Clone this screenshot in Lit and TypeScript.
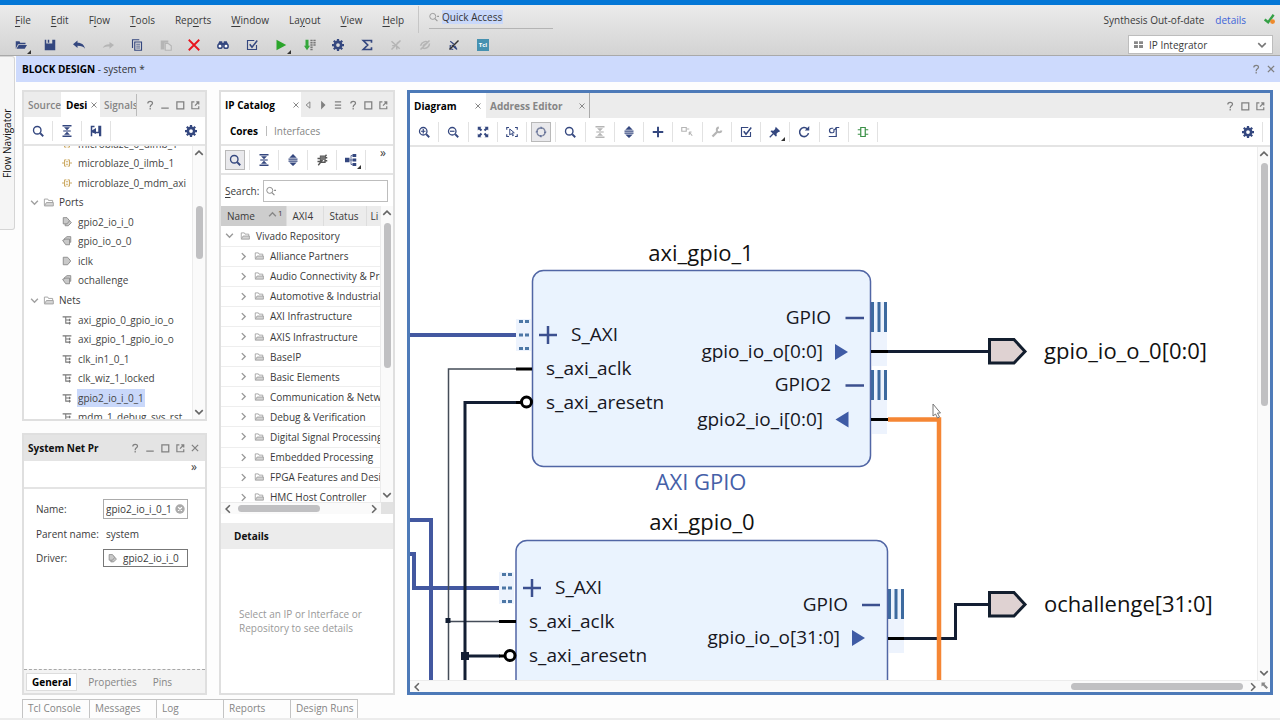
import { LitElement, html, svg, css } from "lit";
import { customElement } from "lit/decorators.js";
import { classMap } from "lit/directives/class-map.js";

const glyphs: Record<string, unknown> = {
  open: svg`<path fill="currentColor" d="M1 3h5l1 2h7v2H4l-3 6zM5 8h11l-3 5H2z"/>`,
  save: svg`<path fill="currentColor" d="M1 1h2v5h8V1h4v14H1zM5 1h2v4H5z"/>`,
  undo: svg`<path fill="currentColor" d="M0 7l6-5v3c6 0 9 3 10 8-2-3-5-4-10-4v3z"/>`,
  redo: svg`<path fill="currentColor" d="M16 8l-6-4v3C5 7 2 9 1 12c3-2 5-2 9-2v3z"/>`,
  copy: svg`<path fill="none" stroke="currentColor" stroke-width="1.5" d="M5 4h9v11H5zM11 1H2v11"/><path stroke="currentColor" d="M7 7h5M7 9.500h5M7 12h5" stroke-width="1"/>`,
  paste: svg`<path fill="currentColor" d="M1 2h10v3H6v9H1z"/><path fill="#ddd" stroke="currentColor" stroke-width="1.500" d="M7 6h4l4 3v6H7z"/>`,
  remove: svg`<path stroke="#e8141c" stroke-width="2.400" d="M1 1l14 14M15 1L1 15"/>`,
  find: svg`<path fill="currentColor" d="M3 3h4v2h2V3h4l2 5H1z"/><circle cx="4" cy="9.500" r="2.900" fill="#fff" stroke="currentColor" stroke-width="2"/><circle cx="12" cy="9.500" r="2.900" fill="#fff" stroke="currentColor" stroke-width="2"/>`,
  check: svg`<path fill="none" stroke="currentColor" stroke-width="1.500" d="M11 2H2v12h12V8"/><path fill="none" stroke="currentColor" stroke-width="2" d="M5 7l3 4 7-9"/>`,
  run: svg`<path fill="#2ba52b" d="M2 1l13 7-13 7z"/>`,
  steps: svg`<path fill="#35a73c" d="M2 1h4v8h2l-4 6-4-6h2z"/><path stroke="#777" stroke-width="3" stroke-dasharray="2 1" d="M10 1v14M14 1v9"/>`,
  gear: svg`<circle cx="8" cy="8" r="4.200" fill="none" stroke="currentColor" stroke-width="3.400"/><path stroke="currentColor" stroke-width="3" d="M8 0v3M8 13v3M0 8h3M13 8h3M2.400 2.400l2 2M11.600 11.600l2 2M13.600 2.400l-2 2M4.400 11.600l-2 2"/>`,
  sigma: svg`<path fill="none" stroke="currentColor" stroke-width="2.200" d="M14 5V2H3l6 6-6 6h11v-3"/>`,
  nolink: svg`<path fill="none" stroke="currentColor" stroke-width="2" d="M2 3l11 10M14 2L2 14M9 6l4-3M3 9l4-2M9 10v4"/>`,
  noeye: svg`<path fill="none" stroke="currentColor" stroke-width="2" d="M14 2L2 14M2 9c2-6 8-6 9-5M5 12c5 2 9-2 9-6M5 9l4-3"/>`,
  nohl: svg`<path fill="none" stroke="currentColor" stroke-width="1.600" d="M3 3l5 4M9 9l3 5M5 8l7 6M3 8v5l4 1"/><path stroke="#333" stroke-width="2" d="M14 2L2 14"/>`,
  zoomin: svg`<circle cx="7" cy="7" r="5" fill="none" stroke="currentColor" stroke-width="1.700"/><path stroke="currentColor" stroke-width="2.400" d="M11 11l4 4"/><path stroke="currentColor" stroke-width="1.600" d="M4 7h6M7 4v6"/>`,
  zoomout: svg`<circle cx="7" cy="7" r="5" fill="none" stroke="currentColor" stroke-width="1.700"/><path stroke="currentColor" stroke-width="2.400" d="M11 11l4 4"/><path stroke="currentColor" stroke-width="1.600" d="M4 7h6"/>`,
  fit: svg`<path fill="currentColor" d="M1 1h5L4.500 2.500 7 5 5 7 2.500 4.500 1 6zM15 1v5l-1.500-1.500L11 7 9 5l2.500-2.500L10 1zM15 15h-5l1.500-1.500L9 11l2-2 2.500 2.500L15 10zM1 15v-5l1.500 1.500L5 9l2 2-2.500 2.500L6 15z"/>`,
  fitsel: svg`<path fill="none" stroke="currentColor" stroke-width="1.500" d="M1 5V2h3M12 2h3v3M15 11v3h-3M4 14H1v-3"/><path fill="none" stroke="currentColor" stroke-width="1.300" d="M5 4l6 5-3 .5 2 3-1 .6-2-3L5 12z"/>`,
  target: svg`<circle cx="8" cy="8" r="5.500" fill="none" stroke="#7b84a0" stroke-width="1.800" stroke-dasharray="6.600 2"/><path stroke="currentColor" stroke-width="1.500" d="M8 1v3M8 12v3M1 8h3M12 8h3"/>`,
  search: svg`<circle cx="7" cy="7" r="5" fill="none" stroke="currentColor" stroke-width="1.800"/><path stroke="currentColor" stroke-width="2.400" d="M11 11l4 4"/>`,
  lookup: svg`<circle cx="6" cy="7" r="4.800" fill="none" stroke="currentColor" stroke-width="1.500"/><path stroke="currentColor" stroke-width="1.800" d="M9.500 10.500l4 4M13 7h3"/>`,
  collapse: svg`<path fill="currentColor" d="M2 0h12v2H2zM4 3h8L8 7zM8 9l4 4H4zM2 14h12v2H2z"/><path stroke="currentColor" stroke-width="1.500" d="M3 8h10"/>`,
  expand: svg`<path fill="currentColor" d="M8 0l5 5H3zM2 6h12v1.600H2zM2 8.600h12v1.600H2zM3 11.200h10l-5 4.800z"/>`,
  add: svg`<path stroke="currentColor" stroke-width="2.600" d="M8 1v14M1 8h14"/>`,
  route: svg`<path fill="none" stroke="currentColor" stroke-width="1.500" d="M1 2h6v5H1zM8 4h3M11 8l4 5M11 8h3M11 8v4"/>`,
  wrench: svg`<path fill="none" stroke="currentColor" stroke-width="3" d="M2 14l7-7"/><path fill="none" stroke="currentColor" stroke-width="2.600" d="M10.500 2A3.200 3.200 0 1 0 14 6"/>`,
  pin: svg`<path fill="currentColor" d="M9 1l6 6-2 1-1 .4-2 2 .4 3L9 14 2 7l1-1 3 .3 2-2z"/><path stroke="currentColor" stroke-width="1.700" d="M6 10l-5 5"/>`,
  refresh: svg`<path fill="none" stroke="currentColor" stroke-width="2" d="M12.500 4A6 6 0 1 0 14 9.500"/><path fill="currentColor" d="M15 0v6H9z"/>`,
  loop: svg`<path fill="none" stroke="currentColor" stroke-width="1.600" d="M7 3H5a3 3 0 0 0 0 6h1a2 2 0 0 0 2-2V4M1 14h10V2h4M9 5l2-3"/>`,
  chip: svg`<path fill="none" stroke="#3b9147" stroke-width="1.600" d="M5 2h6v12H5zM1 5h4M1 11h4M11 5h4M11 11h4"/>`,
  tree: svg`<path fill="currentColor" d="M0 5h6v6H0zM10 0h5v4h-5zM10 6h5v4h-5zM10 12h5v4h-5z"/><path fill="none" stroke="currentColor" d="M6 8h4M8 14V2h2M8 14h2"/>`,
  nochip: svg`<path fill="none" stroke="#555" stroke-width="1.800" d="M6 3h6v8H6zM2 6h4M2 10h4M12 5h3M12 9h3M14 1L3 15"/><path fill="#777" d="M6 3h6v5H6z"/>`,
  follow: svg`<path fill="currentColor" d="M1 1h5v2H3v4l5-3v8L3 10v5H1zM11 1h4v14h-3v-4H7V9h4z"/>`,
  help: svg`<path fill="none" stroke="currentColor" stroke-width="2" d="M4.500 5.500C4.500 1 12 1 12 5c0 2.500-3.700 2.800-3.700 6M8.300 12.500V15"/>`,
  min: svg`<path stroke="currentColor" stroke-width="2" d="M2 13h12"/>`,
  max: svg`<path fill="none" stroke="currentColor" stroke-width="2" d="M3 3h11v11H3z"/>`,
  float: svg`<path fill="none" stroke="currentColor" stroke-width="1.900" d="M7 3H3v11h11v-4M8 9l5-5M10 3h4v4"/>`,
  close: svg`<path stroke="currentColor" stroke-width="2" d="M3 3l10 10M13 3L3 13"/>`,
  prev: svg`<path fill="none" stroke="currentColor" stroke-width="1.500" d="M11 3v10L5 8z"/>`,
  next: svg`<path fill="currentColor" d="M5 1v14l7-7z"/>`,
  list: svg`<path stroke="currentColor" stroke-width="2" d="M3 3h10M3 8h10M3 13h10"/>`,
  up: svg`<path fill="none" stroke="currentColor" stroke-width="2.500" d="M2 11l6-6 6 6"/>`,
  down: svg`<path fill="none" stroke="currentColor" stroke-width="2.500" d="M2 5l6 6 6-6"/>`,
  left: svg`<path fill="none" stroke="currentColor" stroke-width="2.500" d="M11 2L5 8l6 6"/>`,
  right: svg`<path fill="none" stroke="currentColor" stroke-width="2.500" d="M5 2l6 6-6 6"/>`,
  folder: svg`<path fill="none" stroke="currentColor" stroke-width="1.300" d="M2 12V3h5l1 2h6v3"/><path fill="#d4d4d4" stroke="currentColor" stroke-width="1.300" d="M2 13l3-5h10v5z"/>`,
  iface: svg`<path fill="none" stroke="#c9a45a" stroke-width="1.500" d="M7 3H4v10h3M9 3h3v10H9M0 8h4M6 6h4M6 10h4M12 8h4"/>`,
  inport: svg`<path fill="#c9c9c9" stroke="#888" stroke-width="1.400" d="M2 2h7l5 6-5 6H2z"/>`,
  inbus: svg`<path fill="#c9c9c9" stroke="#888" stroke-width="1.400" d="M5 4h5l5 5-5 5H5z"/><path fill="#c9c9c9" stroke="#888" stroke-width="1.400" d="M2 1h6l4 5-4 5H2z"/>`,
  outport: svg`<path fill="#c9c9c9" stroke="#888" stroke-width="1.400" d="M14 1H8L3 5l3 5h8z"/><path fill="#c9c9c9" stroke="#888" stroke-width="1.400" d="M12 5H6L1 7l5 7h6z"/>`,
  net: svg`<path fill="none" stroke="#777" stroke-width="1.700" d="M1 3h14M6 3v10h8M6 8h8M12 6v4M12 11v4"/>`,
  layout: svg`<path fill="#888" d="M0 2h7v5H0zM9 2h7v5H9zM0 9h7v5H0zM9 9h7v5H9z"/>`,
  status: svg`<path fill="none" stroke="#35a046" stroke-width="3.500" d="M1 8l5 4 8-11"/><circle cx="12.500" cy="11" r="3.500" fill="#ee8a2c"/>`,
  clear: svg`<circle cx="8" cy="8" r="7.500" fill="#aaa"/><path stroke="#fff" stroke-width="2" d="M5 5l6 6M11 5l-6 6"/>`,
  resize: svg`<path fill="#888" d="M1 1h8L7 4l7 7-3 3-7-7-3 2z"/>`,
};

const icon = (name: string, size = 12) =>
  html`<svg class="icon" width=${size} height=${size} viewBox="0 0 16 16" aria-hidden="true">${glyphs[name]}</svg>`;

const tool = (name: string, label: string, o: { off?: boolean; on?: boolean; menu?: boolean } = {}) => html`
  <button class=${classMap({ tool: true, off: !!o.off, on: !!o.on, menu: !!o.menu })} aria-label=${label} ?disabled=${!!o.off}>
    ${icon(name)}
  </button>`;

const small = (...names: string[]) => names.map((n) => html`<button class="small" aria-label=${n}>${icon(n, 10)}</button>`);

const scroll = (dir: "v" | "h", before: number, thumb: number, after: number) => html`
  <div class="scroll ${dir}">
    ${icon(dir === "v" ? "up" : "left", 10)}
    <div class="track">
      <span style="flex-grow:${before}"></span><span class="thumb" style="flex-grow:${thumb}"></span><span style="flex-grow:${after}"></span>
    </div>
    ${icon(dir === "v" ? "down" : "right", 10)}
  </div>`;

const menus = [["", "F", "ile"], ["", "E", "dit"], ["F", "l", "ow"], ["", "T", "ools"], ["Rep", "o", "rts"], ["", "W", "indow"], ["La", "y", "out"], ["", "V", "iew"], ["", "H", "elp"]];

const designTree: [string, string][] = [
  ["iface", "microblaze_0_dlmb_1"], ["iface", "microblaze_0_ilmb_1"], ["iface", "microblaze_0_mdm_axi"],
  ["", "Ports"], ["inbus", "gpio2_io_i_0"], ["outport", "gpio_io_o_0"], ["inport", "iclk"], ["outport", "ochallenge"],
  ["", "Nets"], ["net", "axi_gpio_0_gpio_io_o"], ["net", "axi_gpio_1_gpio_io_o"], ["net", "clk_in1_0_1"],
  ["net", "clk_wiz_1_locked"], ["net", "gpio2_io_i_0_1"], ["net", "mdm_1_debug_sys_rst"],
];

const cores = ["Alliance Partners", "Audio Connectivity & Processing", "Automotive & Industrial", "AXI Infrastructure", "AXIS Infrastructure",
  "BaseIP", "Basic Elements", "Communication & Networking", "Debug & Verification", "Digital Signal Processing", "Embedded Processing",
  "FPGA Features and Design", "HMC Host Controller"];

const bars = (x: number, y: number) => svg`
  <rect class="halo" x=${x + 1} y=${y} width="15" height="64"/>
  <path class="bus" d="M${x + 1.5} ${y}v30M${x + 8} ${y}v30M${x + 14.5} ${y}v30"/>`;

const dots = (x: number, y: number) => svg`
  <rect class="halo" x=${x} y=${y - 16} width="15" height="32"/>
  <path class="dots" d="M${x + 3} ${y - 13.5}h10M${x + 3} ${y}h10M${x + 3} ${y + 13.5}h10"/>`;

const plus = (x: number, y: number) => svg`<path class="mark" d="M${x - 9} ${y}h18M${x} ${y - 9}v18"/>`;

@customElement("app-root")
export class AppRoot extends LitElement {
  static styles = css`
    :host { display: flex; flex-direction: column; height: 100vh; overflow: hidden; background: #fdfdfd; color: #3a3a3a;
      font: 10px/14px "Open Sans", "Noto Sans", sans-serif; }
    * { box-sizing: border-box; }
    button, input, select { font: inherit; color: inherit; margin: 0; padding: 0; border: 0; background: none; border-radius: 0; }
    button { cursor: default; }
    a { color: #3d63d8; text-decoration: none; }
    u { text-underline-offset: 2px; }
    .icon { display: block; flex: none; }
    .strip { flex: none; height: 5px; background: #0477d6; }
    .top { flex: none; display: grid; grid-template-columns: 1fr auto; height: 51px; border-bottom: 1px solid #a9a9a9;
      background: linear-gradient(#ebebeb, #d3d3d3); }
    .menubar { display: flex; align-items: center; height: 29px; padding-left: 15px; gap: 20px; }
    .menubar button { white-space: nowrap; }
    .quick { display: flex; align-items: flex-start; height: 27px; padding-left: 10px; margin-left: -6px; border-left: 1px solid #c6c6c6; color: #999; }
    .quick label { display: flex; align-items: center; gap: 3px; width: 124px; height: 23px; border-bottom: 1px solid #b4b4b4; }
    .quick input { width: 61px; height: 14px; background: #c9d8fa; color: #333; outline: 0; }
    .quick input::placeholder { color: #333; opacity: 1; }
    .maintools { display: grid; grid-template-columns: repeat(17, 1fr); width: 490px; height: 22px; margin-left: 7px; }
    .status { display: flex; flex-direction: column; align-items: flex-end; width: 180px; }
    .state { display: flex; align-items: center; height: 29px; gap: 11px; padding-right: 5px; white-space: nowrap; }
    .state .icon { margin-left: 7px; }
    .picker { position: relative; display: flex; align-items: center; width: 145px; height: 19px; margin: 1px 7px 0 0; background: #fff; border: 1px solid #bdbdbd; color: #777; }
    .picker select { position: absolute; inset: 0; padding-left: 20px; appearance: none; color: #3a3a3a; width: 100%; }
    .picker .icon { margin: 0 5px; }
    .picker .icon:last-child { margin-left: auto; }

    .tool { position: relative; display: grid; place-items: center; height: 20px; width: 20px; justify-self: center; align-self: center; color: #34477f; }
    .tool.off { color: #b5b5b5; }
    .tool.on { background: #e9e9ec; border: 1px solid #b9b9b9; }
    .tool.menu::after { content: ""; position: absolute; right: 0; bottom: 1px; border: solid transparent; border-width: 4px 0 0 4px; border-bottom: 4px solid #333; border-top: 0; }
    .small { display: grid; place-items: center; width: 15px; height: 16px; color: #808080; }

    .work { flex: 1; min-height: 0; display: flex; }
    .nav { flex: none; width: 16px; }
    .navtab { display: flex; align-items: center; justify-content: center; width: 15px; height: 174px; background: #f5f5f5; border: 1px solid #d5d5d5;
      border-right: 0; border-radius: 3px 0 0 3px; color: #111; writing-mode: vertical-rl; transform: rotate(180deg); }
    .area { flex: 1; min-width: 0; display: flex; flex-direction: column; }
    .bar { flex: none; display: flex; align-items: center; height: 26px; padding: 0 2px 0 6px; background: #cddafd; }
    .bar h1 { flex: 1; margin: 0; font-size: 10px; line-height: 14px; font-weight: 700; color: #000; }
    .bar h1 span { font-weight: 400; color: #333; }
    .panes { flex: 1; min-height: 0; display: grid; grid-template-columns: 185px 176px minmax(0, 1fr); gap: 12px; padding: 8px 7px 0 6px; }
    .left { display: flex; flex-direction: column; gap: 12px; min-height: 0; }
    .panel { display: flex; flex-direction: column; min-height: 0; min-width: 0; background: #fff; border: 2px solid #dfdfdf; overflow: hidden; }
    .design { height: 331px; flex: none; }
    .props { flex: 1; }
    .head { flex: none; display: flex; align-items: center; height: 25px; padding-right: 3px; background: #ececec; color: #858585; }
    .tab { display: flex; align-items: center; height: 25px; color: #858585; font-weight: 600; white-space: nowrap; }
    .tab.active { background: #fff; color: #000; font-weight: 700; }
    .tab .icon { color: #888; }
    .src { width: 37px; padding-left: 4px; }
    .des { width: 39px; padding-left: 5px; gap: 3px; }
    .sig { width: 37px; height: 22px; padding-left: 4px; border-right: 1px solid #bbb; overflow: hidden; }
    .ipc { width: 80px; padding: 0 1px 0 4px; }
    .dia { width: 76px; padding: 0 4px; }
    .adr { width: 104px; padding: 0 3px 0 4px; font-weight: 700; border-right: 1px solid #aaa; }
    .grow { flex: 1; }
    .tools { flex: none; display: flex; align-items: center; height: 29px; border-bottom: 2px solid #e4e4e4; }
    .tools .cell { display: grid; place-items: center; width: 29px; height: 20px; border-right: 1px solid #e2e2e2; }
    .tools .cell.last { border-right: 0; }
    .edge { width: 8px; height: 20px; border-left: 1px solid #e2e2e2; }
    .over { align-self: flex-start; padding-right: 7px; font-size: 12px; }
    .body { flex: 1; min-height: 0; display: flex; overflow: hidden; }

    .scroll { flex: none; display: flex; align-items: center; background: #fafafa; color: #666; gap: 4px; }
    .scroll.v { flex-direction: column; width: 13px; padding: 2px 0; border-left: 1px solid #ececec; }
    .scroll.h { height: 12px; padding: 0 2px; border-top: 1px solid #ececec; }
    .track { flex: 1; display: flex; align-self: stretch; align-items: center; }
    .track span { flex-basis: 0; }
    .v .track { flex-direction: column; }
    .thumb { background: #c0c0c2; border-radius: 4px; }
    .v .thumb { width: 7px; }
    .h .thumb { height: 7px; }

    .treebox { flex: 1; min-width: 0; overflow: hidden; }
    .tree { display: grid; grid-template-rows: repeat(15, 1fr); height: 293px; margin: -12px 0 0; padding: 0; list-style: none; }
    .tree li { display: flex; align-items: center; gap: 5px; padding-left: 38px; white-space: nowrap; color: #444; }
    .tree li.group { padding-left: 6px; gap: 4px; color: #a0a0a0; }
    .tree li span { padding: 2px 1px; }
    .tree li.group span { color: #3a3a3a; }
    .tree li.picked span { background: #c9d8fa; }

    .props .head { height: 26px; background: #e4e4e4; padding: 0 3px 0 4px; }
    h2 { margin: 0; font-size: 10px; line-height: 14px; font-weight: 700; color: #111; white-space: nowrap; }
    .more { flex: none; height: 28px; padding: 0 8px; text-align: right; border-bottom: 2px solid #e4e4e4; font-size: 12px; line-height: 12px; }
    .form { flex: 1; display: grid; grid-template-columns: 67px 85px; grid-template-rows: 20px 20px 18px; row-gap: 5px; align-content: start; align-items: center; padding: 10px 0 0 12px; }
    .field { display: flex; align-items: center; height: 20px; border: 1px solid #ababab; padding: 0 2px; }
    .field input { flex: 1; min-width: 0; outline: 0; }
    .form output { padding-left: 3px; }
    .driver { display: flex; align-items: center; gap: 6px; height: 18px; padding: 0 4px; border: 1px solid #777; white-space: nowrap; }
    .subtabs { flex: none; display: flex; align-items: center; height: 24px; padding-left: 2px; gap: 6px; background: #f3f3f3; border-top: 1px dashed #a8a8a8; color: #858585; }
    .subtabs button { height: 18px; padding: 0 5px; }
    .subtabs .active { background: #fff; border: 1px solid #ddd; color: #000; font-weight: 700; }

    .kinds { flex: none; display: flex; align-items: center; height: 29px; padding-left: 9px; gap: 7px; color: #858585; border-bottom: 2px solid #e4e4e4; }
    .kinds .active { font-weight: 700; color: #000; padding-right: 8px; border-right: 1px solid #bbb; line-height: 10px; }
    .search { flex: none; display: flex; align-items: center; gap: 4px; height: 31px; padding: 0 5px 0 4px; }
    .searchbox { flex: 1; min-width: 0; display: flex; align-items: center; height: 22px; padding-left: 2px; border: 1px solid #bdbdbd; color: #888; }
    .searchbox input { flex: 1; min-width: 0; outline: 0; }
    .results { flex: none; height: 308px; display: flex; flex-direction: column; }
    .clip { flex: 1; min-width: 0; overflow: hidden; }
    table { width: 100%; height: 302px; table-layout: fixed; border-collapse: collapse; }
    .c1 { width: 65px; }
    .c2 { width: 37px; }
    .c3 { width: 43px; }
    th { height: 20px; padding: 0 0 0 6px; font-weight: 400; text-align: left; background: #ececec; border-right: 1px solid #ddd; overflow: hidden; white-space: nowrap; }
    th:last-child { padding-left: 4px; border-right: 0; }
    th.sorted { background: #cdcdcd; }
    .sort { display: flex; align-items: center; }
    .sort .icon { margin: 0 1px 4px auto; color: #888; }
    .sort small { font-size: 8px; line-height: 8px; margin: 0 3px 6px 0; }
    td { height: 20px; padding: 0; border-bottom: 1px solid #eee; overflow: hidden; white-space: nowrap; }
    .entry { display: flex; align-items: center; gap: 6px; padding-left: 18px; color: #9a9a9a; }
    .entry span { color: #3a3a3a; }
    .entry.root { padding-left: 4px; }
    .hrow { flex: none; display: flex; background: #e2e2e2; }
    .hrow .scroll { flex: 1; margin-right: 12px; }
    .details { flex: none; display: flex; align-items: center; height: 26px; margin-top: 9px; padding-left: 13px; background: #ececec; }
    .empty { flex: 1; display: grid; align-content: center; padding: 0 18px; color: #999; margin: 0; white-space: nowrap; }

    .diagram { border: 3px solid #4d7ab8; }
    .cells { display: grid; grid-template-columns: repeat(16, 1fr); width: 468px; }
    .cells .cell { width: auto; }
    .canvasbox { flex: 1; min-width: 0; overflow: hidden; }
    .canvas { display: block; width: 100%; height: 100%; }
    .foot { flex: none; display: flex; align-items: center; background: #fafafa; }
    .foot .scroll { flex: 1; }
    .foot > .icon { margin: 0 1px; }
    .canvas text { font-size: 19px; fill: #17171f; }
    .canvas .title { font-size: 22px; text-anchor: middle; fill: #111; }
    .canvas .kind { font-size: 22px; text-anchor: middle; fill: #4560a8; }
    .canvas .port { font-size: 22px; fill: #111; }
    .canvas .end { text-anchor: end; }
    .block { fill: #eaf3fe; stroke: #5166a5; stroke-width: 1.5; }
    .halo { fill: #edf3fd; }
    .bus { fill: none; stroke: #3d6a9f; stroke-width: 3; }
    .dots { fill: none; stroke: #4d77a5; stroke-width: 3; stroke-dasharray: 4 2; }
    .mark { fill: none; stroke: #3c508f; stroke-width: 2.5; }
    .tri { fill: #3f5ba5; }
    .wire { fill: none; stroke: #4358a0; stroke-width: 4; }
    .thin { fill: none; stroke: #444c58; stroke-width: 1.5; }
    .reset { fill: none; stroke: #131e33; stroke-width: 3; }
    .stub { fill: none; stroke: #000; stroke-width: 3; }
    .hot { fill: none; stroke: #f58634; stroke-width: 4.5; }
    .term { fill: #dfd2d2; stroke: #131e2e; stroke-width: 3; }
    .dot { fill: #131e33; }
    .ring { fill: #fff; stroke: #000; stroke-width: 3; }
    .tcl { font-size: 6px; font-weight: 700; text-anchor: middle; fill: #fff; }

    .docks { flex: none; display: flex; height: 25px; padding: 4px 0 0 22px; border-bottom: 2px solid #ececec; }
    .docks button { padding: 0 5px 2px; text-align: left; color: #858585; border: 1px solid #c4c4c4; border-bottom: 0; border-left: 0; width: 67px; white-space: nowrap; }
    .docks button:first-child { border-left: 1px solid #c4c4c4; width: 68px; }
  `;

  private diagram() {
    return html`<svg class="canvas" role="img" aria-label="Block diagram">
      <g transform="translate(-410 -147)">
        <path class="wire" d="M410 335H516M410 520H431V680M410 554H414V588H499"/>
        <path class="thin" d="M448.500 680V369H516M448 621.500H499"/>
        <path class="reset" d="M465 680V402.500H516M465 656H500"/>
        <rect class="dot" x="445.500" y="618" width="5" height="5"/>
        <rect class="dot" x="461" y="652" width="8" height="8"/>

        ${dots(516, 335)}${dots(499, 588)}${bars(871, 302)}${bars(871, 370)}${bars(888, 589)}
        <rect class="block" x="532.500" y="270.500" width="338" height="196" rx="11"/>
        <rect class="block" x="516" y="540.500" width="371.500" height="200" rx="11"/>
        <path class="stub" d="M516 369H532M499 621.500H516M516 402.500H522M499 656H504M871 351.500H888M871 419.500H888M888 638.500H904"/>
        <circle class="ring" cx="526.500" cy="402" r="5"/>
        <circle class="ring" cx="510" cy="655.500" r="5"/>

        <text class="title" x="701" y="261">axi_gpio_1</text>
        ${plus(548, 335)}
        <text x="571" y="341">S_AXI</text>
        <text x="546" y="375">s_axi_aclk</text>
        <text x="546" y="409">s_axi_aresetn</text>
        <text class="end" x="831" y="324">GPIO</text>
        <text class="end" x="823" y="358">gpio_io_o[0:0]</text>
        <text class="end" x="831" y="391">GPIO2</text>
        <text class="end" x="823" y="426">gpio2_io_i[0:0]</text>
        <path class="mark" d="M845.500 318H864M845.500 385.500H864M862 605H880"/>
        <path class="tri" d="M835 344v16l13-8zM848.500 411.500v16l-13-8zM852 630v16l13-8z"/>
        <text class="kind" x="701" y="490">AXI GPIO</text>

        <text class="title" x="702" y="530">axi_gpio_0</text>
        ${plus(532, 588)}
        <text x="555" y="594">S_AXI</text>
        <text x="529" y="628">s_axi_aclk</text>
        <text x="529" y="662">s_axi_aresetn</text>
        <text class="end" x="848" y="611">GPIO</text>
        <text class="end" x="840" y="644">gpio_io_o[31:0]</text>

        <path class="reset" d="M888 351.500H989M904 638.500H955.500V604.500H989"/>
        <path class="hot" d="M888 419.500H939V680"/>
        <path class="term" d="M989.500 339.500H1014L1025 351.500L1014 363H989.500zM989.500 592.500H1014L1025 604.500L1014 616H989.500z"/>
        <text class="port" x="1044" y="359">gpio_io_o_0[0:0]</text>
        <text class="port" x="1044" y="612">ochallenge[31:0]</text>
        <path fill="#fff" stroke="#777" d="M933 404v12l2.500-2 2 4 2-1-2-4h3z"/>
      </g>
    </svg>`;
  }

  render() {
    return html`
      <div class="strip"></div>
      <header class="top">
        <div>
          <nav class="menubar">
            ${menus.map(([a, k, b]) => html`<button>${a}<u>${k}</u>${b}</button>`)}
            <div class="quick"><label>${icon("lookup", 10)}<input aria-label="Quick Access" placeholder="Quick Access"></label></div>
          </nav>
          <div class="maintools">
            ${tool("open", "Open", { menu: true })}${tool("save", "Save")}${tool("undo", "Undo")}${tool("redo", "Redo", { off: true })}
            ${tool("copy", "Copy")}${tool("paste", "Paste", { off: true })}${tool("remove", "Delete")}${tool("find", "Find")}
            ${tool("check", "Validate")}${tool("run", "Run", { menu: true })}${tool("steps", "Generate bitstream")}${tool("gear", "Settings")}
            ${tool("sigma", "Report")}${tool("nolink", "Unmark", { off: true })}${tool("noeye", "Unhighlight", { off: true })}${tool("nohl", "Unselect")}
            <button class="tool" aria-label="Tcl console"><svg class="icon" width="12" height="12" aria-hidden="true"><rect width="12" height="12" fill="#4691b0"/><text class="tcl" x="6" y="8">Tcl</text></svg></button>
          </div>
        </div>
        <div class="status">
          <div class="state"><span>Synthesis Out-of-date</span><a href="#details">details</a>${icon("status", 11)}</div>
          <div class="picker">${icon("layout", 9)}<select aria-label="Layout"><option>IP Integrator</option></select>${icon("down", 10)}</div>
        </div>
      </header>

      <main class="work">
        <div class="nav"><button class="navtab">Flow Navigator</button></div>
        <div class="area">
          <div class="bar"><h1>BLOCK DESIGN <span>- system *</span></h1>${small("help", "close")}</div>
          <div class="panes">
            <div class="left">
              <section class="panel design">
                <div class="head">
                  <button class="tab src">Source</button><button class="tab active des">Desi ${icon("close", 8)}</button><button class="tab sig">Signals</button>
                  <span class="grow"></span>${small("help", "min", "max", "float")}
                </div>
                <div class="tools">
                  <div class="cell">${tool("search", "Search")}</div><div class="cell">${tool("collapse", "Collapse all")}</div><div class="cell">${tool("follow", "Follow")}</div>
                  <span class="grow"></span><div class="cell last">${tool("gear", "Settings")}</div>
                </div>
                <div class="body">
                  <div class="treebox"><ul class="tree">
                    ${designTree.map(([kind, name]) => kind
                      ? html`<li class=${name === "gpio2_io_i_0_1" ? "picked" : ""}>${icon(kind, 10)}<span>${name}</span></li>`
                      : html`<li class="group">${icon("down", 9)}${icon("folder", 11)}<span>${name}</span></li>`)}
                  </ul></div>
                  ${scroll("v", 45, 53, 146)}
                </div>
              </section>
              <section class="panel props">
                <div class="head"><h2>System Net Pr</h2><span class="grow"></span>${small("help", "min", "max", "float", "close")}</div>
                <div class="more">»</div>
                <div class="form">
                  <label for="name">Name:</label><div class="field"><input id="name" .value=${"gpio2_io_i_0_1"}>${icon("clear", 10)}</div>
                  <span>Parent name:</span><output>system</output>
                  <span>Driver:</span><button class="driver">${icon("inbus", 9)}gpio2_io_i_0</button>
                </div>
                <div class="subtabs"><button class="active">General</button><button>Properties</button><button>Pins</button></div>
              </section>
            </div>

            <section class="panel catalog">
              <div class="head">
                <button class="tab active ipc">IP Catalog<span class="grow"></span>${icon("close", 8)}</button>
                ${small("prev", "next", "list")}<span class="grow"></span>${small("help", "max", "float")}
              </div>
              <div class="kinds"><button class="active">Cores</button><button>Interfaces</button></div>
              <div class="tools">
                <div class="cell">${tool("search", "Search", { on: true })}</div><div class="cell">${tool("collapse", "Collapse all")}</div>
                <div class="cell">${tool("expand", "Expand all")}</div><div class="cell">${tool("nochip", "Hide incompatible")}</div>
                <div class="cell">${tool("tree", "Group by", { menu: true })}</div><span class="grow"></span><span class="over">»</span>
              </div>
              <div class="search"><label for="find"><u>S</u>earch:</label><div class="searchbox">${icon("lookup", 10)}<input id="find"></div></div>
              <div class="results">
                <div class="body">
                  <div class="clip"><table>
                    <colgroup><col class="c1"><col class="c2"><col class="c3"><col></colgroup>
                    <thead><tr><th class="sorted"><div class="sort">Name${icon("up", 9)}<small>1</small></div></th><th>AXI4</th><th>Status</th><th>Li</th></tr></thead>
                    <tbody>
                      <tr><td colspan="4"><div class="entry root">${icon("down", 9)}${icon("folder", 10)}<span>Vivado Repository</span></div></td></tr>
                      ${cores.map((c) => html`<tr><td colspan="4"><div class="entry">${icon("right", 9)}${icon("folder", 10)}<span>${c}</span></div></td></tr>`)}
                    </tbody>
                  </table></div>
                  ${scroll("v", 1, 136, 110)}
                </div>
                <div class="hrow">${scroll("h", 1, 85, 46)}</div>
              </div>
              <div class="details"><h2>Details</h2></div>
              <p class="empty">Select an IP or Interface or<br>Repository to see details</p>
            </section>

            <section class="panel diagram">
              <div class="head">
                <button class="tab active dia">Diagram<span class="grow"></span>${icon("close", 8)}</button>
                <button class="tab adr">Address Editor<span class="grow"></span>${icon("close", 8)}</button>
                <span class="grow"></span>${small("help", "max", "float")}
              </div>
              <div class="tools">
                <div class="cells">
                  ${[tool("zoomin", "Zoom in"), tool("zoomout", "Zoom out"), tool("fit", "Zoom fit"), tool("fitsel", "Zoom to selection"),
                    tool("target", "Autofit", { on: true }), tool("search", "Search"), tool("collapse", "Collapse", { off: true }), tool("expand", "Expand"),
                    tool("add", "Add IP"), tool("route", "Make connection", { off: true }), tool("wrench", "Customize", { off: true }), tool("check", "Validate"),
                    tool("pin", "Pin", { menu: true }), tool("refresh", "Regenerate layout"), tool("loop", "Optimize routing"), tool("chip", "Interfaces")]
                    .map((t) => html`<div class="cell">${t}</div>`)}
                </div>
                <span class="grow"></span><div class="cell last">${tool("gear", "Settings")}</div><span class="edge"></span>
              </div>
              <div class="body"><div class="canvasbox">${this.diagram()}</div>${scroll("v", 0, 244, 260)}</div>
              <div class="foot">${scroll("h", 644, 172, 1)}${icon("resize", 8)}</div>
            </section>
          </div>
        </div>
      </main>
      <footer class="docks">
        ${["Tcl Console", "Messages", "Log", "Reports", "Design Runs"].map((t) => html`<button>${t}</button>`)}
      </footer>`;
  }
}
